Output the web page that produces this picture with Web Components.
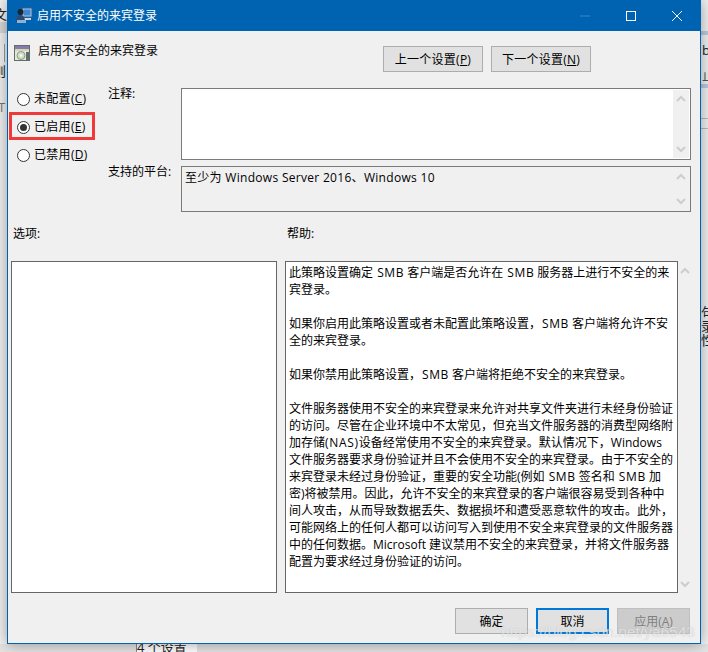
<!DOCTYPE html>
<html lang="zh-CN">
<head>
<meta charset="utf-8">
<title>启用不安全的来宾登录</title>
<style>
  html, body { margin: 0; padding: 0; height: 100%; overflow: hidden; }
  body { font: 12px/17px "Open Sans", "Noto Sans CJK SC", sans-serif; color: #000; }
  .settings { display: grid; grid-template-columns: 91px 73px 510px; grid-template-rows: 72px 46px; row-gap: 6px; padding: 3px 0 0 9px; }
  .settings gp-radio-group { grid-row: 1 / span 2; margin-top: -3px; }
  .panes { display: flex; gap: 8px; padding-left: 3px; }
  .foot { display: flex; justify-content: flex-end; gap: 8px; padding: 15px 10px 0 0; }
  /* latin runs come out narrower here than in the screenshot */
  .smb { letter-spacing: .6px; margin-left: 1px; }
  .nas { letter-spacing: .7px; }
  .wide { letter-spacing: .3px; }
</style>
</head>
<body>
<gp-desktop>
  <gp-window heading="启用不安全的来宾登录">
    <gp-header heading="启用不安全的来宾登录">
      <gp-button wide>上一个设置(<u>P</u>)</gp-button>
      <gp-button wide>下一个设置(<u>N</u>)</gp-button>
    </gp-header>
    <div class="settings">
      <gp-radio-group>
        <gp-radio>未配置(<u>C</u>)</gp-radio>
        <gp-radio checked marked>已启用(<u>E</u>)</gp-radio>
        <gp-radio>已禁用(<u>D</u>)</gp-radio>
      </gp-radio-group>
      <gp-caption>注释:</gp-caption>
      <gp-textbox></gp-textbox>
      <gp-caption>支持的平台:</gp-caption>
      <gp-textbox readonly><span class="wide">至少为 Windows Server 2016、Windows 10</span></gp-textbox>
    </div>
    <gp-pane-heads></gp-pane-heads>
    <div class="panes">
      <gp-textbox plain style="width:266px;height:332px"></gp-textbox>
      <gp-textbox outside style="width:407px;height:332px">此策略设置确定 <span class="smb">SMB</span> 客户端是否允许在 <span class="smb">SMB</span> 服务器上进行不安全的来<br>宾登录。<br><br>如果你启用此策略设置或者未配置此策略设置，<span class="smb">SMB</span> 客户端将允许不安<br>全的来宾登录。<br><br>如果你禁用此策略设置，<span class="smb">SMB</span> 客户端将拒绝不安全的来宾登录。<br><br>文件服务器使用不安全的来宾登录来允许对共享文件夹进行未经身份验证<br>的访问。尽管在企业环境中不太常见，但充当文件服务器的消费型网络附<br>加存储<span class="nas">(NAS)</span>设备经常使用不安全的来宾登录。默认情况下，Windows<br>文件服务器要求身份验证并且不会使用不安全的来宾登录。由于不安全的<br>来宾登录未经过身份验证，重要的安全功能(例如 <span class="smb">SMB</span> 签名和 <span class="smb">SMB</span> 加<br>密)将被禁用。因此，允许不安全的来宾登录的客户端很容易受到各种中<br>间人攻击，从而导致数据丢失、数据损坏和遭受恶意软件的攻击。此外，<br>可能网络上的任何人都可以访问写入到使用不安全来宾登录的文件服务器<br>中的任何数据。Microsoft 建议禁用不安全的来宾登录，并将文件服务器<br>配置为要求经过身份验证的访问。</gp-textbox>
    </div>
    <div class="foot">
      <gp-button>确定</gp-button>
      <gp-button focused>取消</gp-button>
      <gp-button disabled>应用(<u>A</u>)</gp-button>
    </div>
  </gp-window>
</gp-desktop>

<script>
// what shows of the app behind the dialog, plus the blog watermark on top
class GpDesktop extends HTMLElement {
  constructor() {
    super();
    this.attachShadow({ mode: 'open' });
    this.shadowRoot.innerHTML = `
      <style>
        :host { display: block; position: relative; width: 708px; height: 652px; overflow: hidden; background: #f2f2f2; }
        .bit { position: absolute; line-height: 14px; font-size: 13px; white-space: nowrap; color: #222; }
        .band { position: absolute; left: 701px; width: 7px; height: 4px; background: #bccbe4; }
        .line { position: absolute; left: 701px; width: 7px; height: 1px; background: #bbb; }
        .lside { position: absolute; left: 0; width: 7px; background: #d8d8d8; }
        .cell { position: absolute; left: 136px; top: 644px; width: 60px; height: 8px; background: #fff; border-left: 1px solid #888; }
        .floor { position: absolute; left: 0; top: 644px; width: 708px; height: 8px; background: #e4e4e4; }
        .wm { position: absolute; left: 501px; top: 622px; font: 15.5px/20px "Liberation Sans", sans-serif; color: rgba(255,255,255,.62); text-shadow: 0 0 1px rgba(120,120,120,.4); white-space: nowrap; z-index: 5; }
      </style>
      <div class="floor"></div>
      <div class="cell"></div>
      <div class="lside" style="top:22px;height:11px"></div>
      <div class="lside" style="top:44px;height:18px;background:#fff;border-right:1px solid #999;width:1px;left:3px"></div>
      <div class="bit" style="left:-6px;top:7px">文</div>
      <div class="bit" style="left:-7px;top:64px">则</div>
      <div class="bit" style="left:-2px;top:100px;color:#777">T</div>
      <div class="band" style="top:31px"></div>
      <div class="band" style="top:84px"></div>
      <div class="line" style="top:118px"></div>
      <div class="line" style="top:128px"></div>
      <div class="bit" style="left:702px;top:43px">b</div>
      <div class="bit" style="left:702px;top:68px;color:#555">止</div>
      <div class="bit" style="left:701px;top:305px">句</div>
      <div class="bit" style="left:701px;top:319px">录</div>
      <div class="bit" style="left:701px;top:333px">性</div>
      <div class="bit" style="left:137px;top:640px">4 个设置</div>
      <slot></slot>
      <div class="wm">https://blog.csdn.net/ya6543</div>
    `;
  }
}

class GpWindow extends HTMLElement {
  constructor() {
    super();
    this.attachShadow({ mode: 'open' });
    this.shadowRoot.innerHTML = `
      <style>
        :host { display: block; position: absolute; left: 7px; top: 0; width: 692px; height: 643px; background: #f0f0f0; border: 1px solid #0063b1; border-top: 0; box-shadow: 0 0 14px rgba(0,0,0,.38); }
        header { height: 31px; background: #0063b1; display: flex; align-items: center; color: #fff; padding-left: 8px; }
        svg.app { width: 17px; height: 17px; margin-right: 4px; flex: none; }
        .title { flex: 1; font-size: 12px; margin-top: -1px; }
        .ctl { width: 46px; height: 31px; display: flex; align-items: center; justify-content: center; }
        .ctl svg { width: 12px; height: 12px; }
      </style>
      <header>
        <svg class="app" viewBox="0 0 17 17">
          <rect x="6" y="1" width="10" height="9" fill="#a9c6e6" stroke="#2f5f8f"/>
          <rect x="7.5" y="2.5" width="7" height="6" fill="#3c88d0"/>
          <rect x="8" y="11" width="7" height="2" fill="#cfd6de"/>
          <circle cx="4.5" cy="5" r="3" fill="#1c2430"/>
          <path d="M0 15c0-5 2-7 4.5-7S9 10 9 15z" fill="#2d4a70"/>
          <rect x="1" y="13" width="9" height="3" fill="#8fb0d4"/>
        </svg>
        <span class="title"></span>
        <div class="ctl"><svg viewBox="0 0 12 12"><path d="M1 6h10" stroke="#3f86c4" fill="none"/></svg></div>
        <div class="ctl"><svg viewBox="0 0 12 12"><rect x="1.5" y="1.5" width="9" height="9" fill="none" stroke="#fff"/></svg></div>
        <div class="ctl"><svg viewBox="0 0 12 12"><path d="M1 1l10 10M11 1L1 11" stroke="#fff" fill="none"/></svg></div>
      </header>
      <slot></slot>
    `;
    this.shadowRoot.querySelector('.title').textContent = this.getAttribute('heading');
  }
}

class GpHeader extends HTMLElement {
  constructor() {
    super();
    this.attachShadow({ mode: 'open' });
    this.shadowRoot.innerHTML = `
      <style>
        :host { display: flex; height: 54px; box-sizing: border-box; padding: 14px 109px 0 6px; }
        .name { flex: 1; display: flex; gap: 8px; align-items: flex-start; }
        svg { width: 16px; height: 16px; flex: none; }
        .buttons { display: flex; gap: 8px; padding-top: 1px; }
        .text { line-height: 17px; margin-top: -3px; }
      </style>
      <div class="name">
        <svg viewBox="0 0 16 16">
          <rect x="0" y="0" width="16" height="16" fill="#5f6f6a"/>
          <rect x="1" y="1" width="14" height="3" fill="#8a78b0"/>
          <rect x="1" y="4" width="14" height="2" fill="#d8d4b8"/>
          <rect x="1" y="6" width="14" height="9" fill="#e8e8d8"/>
          <circle cx="7" cy="10.5" r="4" fill="#cfe0c8" stroke="#8a9a80"/>
          <circle cx="7" cy="10.5" r="1.2" fill="#fff"/>
          <rect x="12" y="7" width="3" height="8" fill="#5f6f6a"/>
        </svg>
        <span class="text"></span>
      </div>
      <div class="buttons"><slot></slot></div>
    `;
    this.shadowRoot.querySelector('.text').textContent = this.getAttribute('heading');
  }
}

class GpButton extends HTMLElement {
  constructor() {
    super();
    this.attachShadow({ mode: 'open' });
    this.shadowRoot.innerHTML = `
      <style>
        :host { display: flex; align-items: center; justify-content: center; box-sizing: border-box; width: 73px; height: 26px; background: #e1e1e1; border: 1px solid #adadad; font-size: 12px; color: #000; }
        :host([wide]) { width: 100px; letter-spacing: .25px; }
        :host([focused]) { border: 2px solid #0078d7; }
        :host([disabled]) { background: #cccccc; border-color: #bfbfbf; color: #808080; }
      </style>
      <slot></slot>
    `;
  }
}

class GpRadioGroup extends HTMLElement {
  constructor() {
    super();
    this.attachShadow({ mode: 'open' });
    this.shadowRoot.innerHTML = `
      <style>:host { display: flex; flex-direction: column; }</style>
      <slot></slot>
    `;
  }
}

class GpRadio extends HTMLElement {
  constructor() {
    super();
    this.attachShadow({ mode: 'open' });
    this.shadowRoot.innerHTML = `
      <style>
        :host { display: flex; align-items: center; gap: 4px; height: 28px; position: relative; font-size: 12px; letter-spacing: .3px; }
        .dot { box-sizing: border-box; width: 13px; height: 13px; border: 1px solid #333; border-radius: 50%; background: #fff; display: flex; align-items: center; justify-content: center; flex: none; }
        .label { margin-top: -2px; }
        :host([checked]) .dot::after { content: ""; width: 7px; height: 7px; border-radius: 50%; background: #333; }
        /* red box somebody drew on the screenshot */
        :host([marked])::after { content: ""; position: absolute; left: -8px; top: -1px; width: 80px; height: 22px; border: 3px solid #f03a3a; }
      </style>
      <span class="dot"></span><span class="label"><slot></slot></span>
    `;
  }
}

class GpCaption extends HTMLElement {
  constructor() {
    super();
    this.attachShadow({ mode: 'open' });
    this.shadowRoot.innerHTML = `
      <style>:host { display: block; font-size: 12px; margin-top: -3px; }</style>
      <slot></slot>
    `;
  }
}

class GpPaneHeads extends HTMLElement {
  constructor() {
    super();
    this.attachShadow({ mode: 'open' });
    this.shadowRoot.innerHTML = `
      <style>
        :host { display: flex; box-sizing: border-box; height: 49px; padding: 13px 0 0 5px; font-size: 12px; }
        span { display: block; width: 274px; }
      </style>
      <span>选项:</span><span>帮助:</span>
    `;
  }
}

class GpTextbox extends HTMLElement {
  constructor() {
    super();
    this.attachShadow({ mode: 'open' });
    this.shadowRoot.innerHTML = `
      <style>
        :host { display: block; box-sizing: border-box; position: relative; background: #fff; border: 1px solid #7a7a7a; font-size: 12px; line-height: 17px; white-space: nowrap; }
        :host([readonly]) { background: #f0f0f0; }
        :host([plain]) { border-color: #666; }
        :host([outside]) { background: transparent; border: 0; }
        .text { box-sizing: border-box; height: 100%; padding: 2px 3px; }
        :host([outside]) .text { background: #fff; border: 1px solid #666; width: 393px; }
        .sb { position: absolute; right: 1px; top: 1px; bottom: 1px; width: 16px; background: #f0f0f0; display: flex; flex-direction: column; justify-content: space-between; align-items: center; padding: 5px 0; box-sizing: border-box; }
        :host([outside]) .sb { right: 0; top: 1px; bottom: 0; width: 14px; }
        svg { width: 10px; height: 7px; display: block; }
      </style>
      <div class="text"><slot></slot></div>
      <div class="sb">
        <svg viewBox="0 0 10 7"><path d="M1 6l4-4 4 4" fill="none" stroke="#cdcdcd" stroke-width="2"/></svg>
        <svg viewBox="0 0 10 7"><path d="M1 1l4 4 4-4" fill="none" stroke="#cdcdcd" stroke-width="2"/></svg>
      </div>
    `;
    if (this.hasAttribute('plain')) this.shadowRoot.querySelector('.sb').remove();
  }
}

customElements.define('gp-desktop', GpDesktop);
customElements.define('gp-window', GpWindow);
customElements.define('gp-header', GpHeader);
customElements.define('gp-button', GpButton);
customElements.define('gp-radio-group', GpRadioGroup);
customElements.define('gp-radio', GpRadio);
customElements.define('gp-caption', GpCaption);
customElements.define('gp-pane-heads', GpPaneHeads);
customElements.define('gp-textbox', GpTextbox);
</script>
</body>
</html>
